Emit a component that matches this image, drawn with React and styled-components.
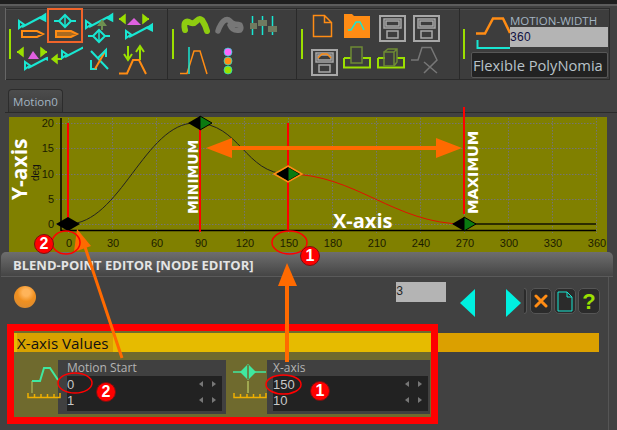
import React from 'react';
import styled, { createGlobalStyle } from 'styled-components';

const CYAN = '#19e6d2';
const LIME = '#9be000';
const ORANGE = '#ff8c14';
const ARROW = '#ff6a00';
const GRAY = '#a8a8a8';

const GlobalStyle = createGlobalStyle`
  html, body {
    margin: 0;
    padding: 0;
    background: #414141;
    font-family: "Open Sans", "Liberation Sans", sans-serif;
  }
`;

const Page = styled.div`
  position: relative;
  width: 617px;
  height: 430px;
  overflow: hidden;
  background: #414141;
  display: flex;
  flex-direction: column;
`;

const TopStrip = styled.div`
  height: 4px;
  flex: none;
  background: #1f1f1f;
  border-bottom: 2px solid #5c5c5c;
`;

const Toolbar = styled.div`
  flex: none;
  display: flex;
  height: 72px;
  margin: 2px 0 0 5px;
  border-left: 1px solid #666;
`;

const ToolGroup = styled.div`
  width: ${(p) => p.$width}px;
  display: flex;
  align-items: center;
  gap: ${(p) => p.$gap}px;
  padding-left: ${(p) => p.$pad}px;
  box-sizing: border-box;
  background: #3d3d3d;
  border-top: 1px solid #2c2c2c;
  border-right: 1px solid #2a2a2a;
  border-bottom: 1px solid #2a2a2a;
  box-shadow: inset 0 1px 0 #4d4d4d;
`;

const GreenBar = styled.div`
  width: 2px;
  height: 30px;
  flex: none;
  background: ${LIME};
`;

const ToolGrid = styled.div`
  display: grid;
  grid-template-columns: repeat(${(p) => p.$cols}, ${(p) => p.$cell}px);
  grid-auto-rows: 35px;
`;

const Tile = styled.div`
  position: relative;
  width: 100%;
  height: 35px;
  svg {
    display: block;
  }
  ${(p) =>
    p.$active &&
    `
    &::after {
      content: '';
      position: absolute;
      left: -1px;
      top: -1px;
      width: 32px;
      height: 31px;
      border: 2px solid #f0642a;
    }
  `}
`;

const WidthBlock = styled.div`
  position: relative;
  align-self: flex-start;
  display: flex;
  flex-direction: column;
  width: 137px;
  margin: 5px 0 0 6px;
`;

const WidthTop = styled.div`
  display: flex;
  height: 38px;
`;

const WidthFields = styled.div`
  flex: 1;
  display: flex;
  flex-direction: column;
`;

const WidthLabel = styled.div`
  font: 11.5px/13px "Open Sans", sans-serif;
  color: #a3b4c2;
  height: 13px;
  white-space: nowrap;
`;

const WidthInput = styled.div`
  height: 20px;
  background: #b4b4b4;
  color: #101040;
  font: 12px/20px "Liberation Sans", sans-serif;
  letter-spacing: 0.3px;
`;

const Dropdown = styled.div`
  height: 26px;
  box-sizing: border-box;
  background: #222;
  border: 1px solid #575757;
  border-radius: 2px;
  color: #b9c2c9;
  font: 14.7px/24px "Open Sans", sans-serif;
  padding-left: 1px;
  white-space: nowrap;
`;

const TabStrip = styled.div`
  flex: none;
  height: 25px;
  margin: 8px 0 0 5px;
  display: flex;
  align-items: flex-end;
  padding-left: 3px;
  border-bottom: 1px solid #2a2a2a;
  box-sizing: border-box;
`;

const Tab = styled.div`
  width: 55px;
  height: 23px;
  box-sizing: border-box;
  border: 1px solid #2c2c2c;
  border-bottom: none;
  border-radius: 4px 4px 0 0;
  background: linear-gradient(#4c4c4c, #3b3b3b);
  color: #a3b4c2;
  font: 11.5px/24px "Open Sans", sans-serif;
  text-align: center;
`;

const ChartWrap = styled.div`
  flex: none;
  height: 135px;
  margin: 4px 10px 0 9px;
  background: #808000;
  svg {
    display: block;
    overflow: visible;
  }
`;

const Editor = styled.div`
  position: relative;
  z-index: 1;
  flex: 1;
  margin: 0 4px 0 1px;
  display: flex;
  flex-direction: column;
  background: #414141;
  border-radius: 5px 5px 0 0;
`;

const EditorTitle = styled.div`
  height: 25px;
  flex: none;
  box-sizing: border-box;
  padding-left: 12px;
  background: linear-gradient(#6e6e6e, #454545);
  border-radius: 5px 5px 0 0;
  border-bottom: 1px solid #5a5a5a;
  color: #e4e4e4;
  font: bold 13px/26px "Open Sans", sans-serif;
  white-space: nowrap;
`;

const EditorBody = styled.div`
  flex: 1;
  margin: 0 4px;
  padding: 5px 0 0 2px;
  border-right: 1px solid #555;
`;

const Controls = styled.div`
  display: flex;
  height: 42px;
  align-items: flex-start;
`;

const Ball = styled.div`
  width: 22px;
  height: 22px;
  margin: 4px 0 0 7px;
  border-radius: 50%;
  background: radial-gradient(circle at 55% 30%, #ffb45a 0 18%, #f09020 45%, #d08838 100%);
`;

const CountField = styled.div`
  width: 50px;
  height: 20px;
  margin-left: 360px;
  background: #b4b4b4;
  color: #222;
  font: 12px/20px "Liberation Mono", monospace;
`;

const Pointers = styled.div`
  display: flex;
  gap: 31px;
  margin: 7px 0 0 14px;
`;

const IconButtons = styled.div`
  display: flex;
  gap: 2px;
  margin: 6px 0 0 3px;
`;

const ButtonStub = styled.div`
  width: 3px;
  height: 26px;
  margin-right: 1px;
  box-sizing: border-box;
  border: 1px solid #555;
  border-left: none;
  border-radius: 0 5px 5px 0;
  background: #2b2b2b;
`;

const IconButton = styled.div`
  width: 22px;
  height: 26px;
  box-sizing: border-box;
  border: 1px solid #555;
  border-radius: 5px;
  background: #2b2b2b;
  display: flex;
  align-items: center;
  justify-content: center;
  color: ${(p) => p.$color};
  font: bold 22px/25px "Liberation Sans", sans-serif;
`;

const ValuesRow = styled.div`
  display: flex;
`;

const HighlightBox = styled.div`
  width: 431px;
  height: 100px;
  box-sizing: border-box;
  border: 7px solid #ff0000;
  background: #6f6a2e;
  display: flex;
  flex-direction: column;
`;

const SectionBar = styled.div`
  height: 19px;
  margin-top: 2px;
  flex: none;
  background: #e6bb00;
`;

const SectionLabel = styled.div`
  width: 96px;
  height: 19px;
  margin-left: 3px;
  background: #d8a200;
  color: #111;
  font: 15.2px/20px "Open Sans", sans-serif;
  white-space: nowrap;
`;

const BarTail = styled.div`
  width: 161px;
  height: 19px;
  margin-top: 9px;
  background: #dba000;
`;

const FieldRow = styled.div`
  display: flex;
  margin-top: 8px;
`;

const FieldIcon = styled.div`
  position: relative;
  z-index: 1;
  width: ${(p) => p.$width}px;
  padding-left: ${(p) => p.$pad}px;
  box-sizing: border-box;
  flex: none;
  svg {
    display: block;
    overflow: visible;
  }
`;

const FieldCard = styled.div`
  width: ${(p) => p.$width}px;
  height: 54px;
  flex: none;
  box-sizing: border-box;
  background: #404040;
  padding-left: ${(p) => p.$pad}px;
`;

const FieldTitle = styled.div`
  height: 16px;
  color: #b4b4b4;
  font: 12px/16px "Open Sans", sans-serif;
`;

const FieldBody = styled.div`
  width: ${(p) => p.$width}px;
  height: 35px;
  background: #222;
`;

const FieldLine = styled.div`
  height: 16px;
  display: flex;
  align-items: center;
  color: #c8c8c8;
  font: 13px/15px "Liberation Sans", sans-serif;
`;

const Spin = styled.div`
  margin-left: auto;
  margin-right: 6px;
  display: flex;
  gap: 9px;
`;

const SpinArrow = styled.span`
  width: 0;
  height: 0;
  border-top: 3.5px solid transparent;
  border-bottom: 3.5px solid transparent;
  ${(p) => (p.$dir === 'left' ? 'border-right: 4px solid #777;' : 'border-left: 4px solid #777;')}
`;

const Overlay = styled.svg`
  position: absolute;
  left: 0;
  top: 0;
  z-index: 2;
  pointer-events: none;
`;

const Badge = styled.div`
  position: absolute;
  z-index: 3;
  left: ${(p) => p.$x - 10}px;
  top: ${(p) => p.$y - 10}px;
  width: 20px;
  height: 20px;
  box-sizing: border-box;
  border-radius: 50%;
  background: #f00;
  border: 1px solid #7a1010;
  color: #fff;
  font: bold 16px/18px "Liberation Sans", sans-serif;
  text-align: center;
`;

const Tool = ({ x, y, w = 35, h = 35, children }) => (
  <svg width={w} height={h} viewBox={`${x} ${y} ${w} ${h}`} fill="none" strokeWidth="1.5">
    {children}
  </svg>
);

// ramp with a small end triangle on both sides
const Ramp = ({ dx = 0, dy = 0 }) => (
  <g transform={`translate(${dx} ${dy})`} stroke={CYAN}>
    <path d="M19 21 L19 28 L24 24.5 Z" strokeWidth="2" />
    <path d="M22 27 L41 17" strokeWidth="2" />
    <path d="M45.5 14 L45.5 21 L39.5 18 Z" fill={CYAN} />
  </g>
);

const Pencil = ({ dx = 0, dy = 0, filled }) => (
  <path
    transform={`translate(${dx} ${dy})`}
    d="M22 31 H37 L43 34 L37 37 H22 Z"
    stroke={ORANGE}
    strokeWidth="2"
    fill={filled ? '#a86a20' : 'none'}
  />
);

const Node = ({ cx, cy, span = 11 }) => (
  <g stroke={CYAN}>
    <path d={`M${cx - span} ${cy} H${cx + span}`} strokeWidth="2" />
    <path d={`M${cx} ${cy - 6} L${cx + 6} ${cy} L${cx} ${cy + 6} L${cx - 6} ${cy} Z`} fill="#3d3d3d" strokeWidth="2" />
    <path d={`M${cx} ${cy - 5} V${cy + 5}`} />
  </g>
);

const Bracket = ({ x, y, dir }) => (
  <g fill={LIME} stroke={LIME}>
    <path d={`M${x} ${y} h${dir * 6}`} strokeWidth="2" />
    <path d={`M${x + dir * 6} ${y - 4} v8 l${-dir * 5} -4 Z`} />
  </g>
);

const Floppy = ({ x, y, stroke = GRAY, children }) => (
  <g stroke={stroke} transform={`translate(${x} ${y})`}>
    <rect x="1" y="1" width="25" height="25" strokeWidth="2" />
    <rect x="5" y="4" width="17" height="9" />
    <rect x="7" y="6" width="13" height="5" />
    <rect x="8" y="16" width="11" height="7" strokeWidth="1.5" />
    {children}
  </g>
);

const Tray = ({ x, children }) => (
  <g>
    <path d={`M${x + 1} 58 V67.5 H${x + 27} V58 H${x + 20} M${x + 8} 58 H${x + 1}`} stroke={LIME} strokeWidth="2" />
    {children}
  </g>
);

const MotionTools = [
  <Tool x={13} y={9} key="a1"><Ramp /><Pencil /></Tool>,
  <Tool x={48} y={9} key="a2"><Node cx={65} cy={21} /><Pencil dx={34} filled /></Tool>,
  <Tool x={83} y={9} key="a3">
    <Ramp dx={67} />
    <path d="M102 30 V24 M99 25 L102 21 L105 25 Z" stroke="#6f8f50" strokeWidth="2" fill="#6f8f50" />
    <Node cx={99} cy={36} />
  </Tool>,
  <Tool x={118} y={9} key="a4">
    <Bracket x={119} y={19} dir={1} />
    <path d="M134 18 L141 25 H127 Z" fill="#e060e0" />
    <Bracket x={149} y={19} dir={-1} />
    <Ramp dx={107} dy={10} />
  </Tool>,
  <Tool x={13} y={44} key="b1">
    <Bracket x={17} y={52} dir={1} />
    <path d="M33 51 L39 59 H28 Z" fill="#e060e0" />
    <Bracket x={47} y={52} dir={-1} />
    <Ramp dx={6} dy={41} />
  </Tool>,
  <Tool x={48} y={44} key="b2">
    <path d="M52 59 L57 55 V63 Z" fill={LIME} stroke={LIME} />
    <path d="M56 59 H62" stroke={LIME} strokeWidth="2" />
    <Ramp dx={43} dy={30} />
  </Tool>,
  <Tool x={83} y={44} key="b3">
    <path d="M91 51 L108 69" stroke={CYAN} strokeWidth="2" />
    <path d="M91 60 V69 H97" stroke={CYAN} strokeWidth="2" />
    <path d="M95 69 L106 50" stroke={ORANGE} strokeWidth="2" />
    <path d="M98 58 L106 50 V57" stroke={CYAN} strokeWidth="2" />
  </Tool>,
  <Tool x={118} y={44} key="b4">
    <path d="M128 46 V58 M124 54 L128 60 L132 54" stroke={LIME} strokeWidth="2" />
    <path d="M140 60 V48 M136 52 L140 46 L144 52" stroke={LIME} strokeWidth="2" />
    <path d="M119 73.5 H127 L133 60 H139 L146 74" stroke={ORANGE} strokeWidth="2" />
  </Tool>,
];

const CurveTools = [
  <Tool x={180} y={9} key="c1" w={35}>
    <path d="M185 30 C183 22 186 20 191 23 C197 25 197 16 202 20 C204 23 206 27 207 31" stroke="#8ecc10" strokeWidth="6" strokeLinecap="round" />
  </Tool>,
  <Tool x={215} y={9} key="c2" w={35}>
    <path d="M218 31 C221 22 226 17 230 21 C233 26 236 23 240 25 C241 27 241 29 240 30 C235 31 232 30 230 25" stroke="#777" strokeWidth="5.5" strokeLinecap="round" />
  </Tool>,
  <Tool x={250} y={9} key="c3" w={35}>
    <path d="M252.5 16 V35 M262.5 16 V35 M272.5 16 V35" stroke={CYAN} strokeWidth="1.5" />
    <rect x="248" y="23" width="9" height="6" fill="#707a60" />
    <rect x="258" y="20" width="9" height="6" fill="#707a60" />
    <rect x="268" y="26" width="9" height="6" fill="#707a60" />
  </Tool>,
  <Tool x={180} y={44} key="d1" w={35}>
    <path d="M180 73.5 H187 L194 51 H200 L207 74" stroke={ORANGE} strokeWidth="1.5" />
    <path d="M189 47 V74" stroke={CYAN} strokeWidth="1.5" />
  </Tool>,
  <Tool x={215} y={44} key="d2" w={35}>
    <circle cx="228" cy="52" r="4" fill="#ff66ff" stroke={CYAN} strokeWidth="0.7" />
    <circle cx="228" cy="61" r="4" fill={ORANGE} stroke={CYAN} strokeWidth="0.7" />
    <circle cx="228" cy="70" r="4" fill={LIME} stroke={CYAN} strokeWidth="0.7" />
  </Tool>,
];

const FileTools = [
  <Tool x={309} y={9} key="e1">
    <path d="M313.5 15.5 H324.5 L331.5 22.5 V36.5 H313.5 Z M324.5 15.5 V22.5 H331.5" stroke={ORANGE} />
  </Tool>,
  <Tool x={343} y={9} key="e2">
    <path d="M344 14 H352 L354 16 H370 V38 H344 Z" fill={ORANGE} />
    <path d="M348 30 H351 L356 22 H360 L364 30" stroke={CYAN} strokeWidth="1.5" />
  </Tool>,
  <Tool x={377} y={9} key="e3"><Floppy x={379} y={15} /></Tool>,
  <Tool x={411} y={9} key="e4"><Floppy x={413} y={15} /></Tool>,
  <Tool x={309} y={44} key="f1">
    <Floppy x={311} y={49}>
      <path d="M7 9 L11 5 H16 L20 9" stroke={ORANGE} strokeWidth="1.5" />
    </Floppy>
  </Tool>,
  <Tool x={343} y={44} key="f2">
    <Tray x={343} />
    <rect x="351" y="47" width="11" height="16" stroke="#6e8a35" strokeWidth="1.5" />
  </Tool>,
  <Tool x={377} y={44} key="f3">
    <Tray x={377} />
    <path d="M384 52 H394 V66 H384 Z M384 52 L388 49 H397 V62 L394 66 M394 52 L397 49" stroke="#6e8a35" strokeWidth="1.5" />
  </Tool>,
  <Tool x={411} y={44} key="f4">
    <path d="M411 60 H418 L422 47.5 H431 L437 60 L424 73 M424 62 L437 73" stroke="#777" strokeWidth="1.5" />
  </Tool>,
];

const xTicks = [0, 30, 60, 90, 120, 150, 180, 210, 240, 270, 300, 330, 360];
const yTicks = [0, 5, 10, 15, 20];
const px = (v) => 68 + (v / 30) * 44;
const py = (v) => Math.round(224 - v * 5.05);

const HalfDiamond = ({ x, y, w = 12, h = 7, ring }) => (
  <g>
    <path d={`M${x} ${y - h} L${x - w} ${y} L${x} ${y + h} Z`} fill="#000" />
    <path d={`M${x} ${y - h} L${x + w} ${y} L${x} ${y + h} Z`} fill={ring === 'plain' ? '#000' : '#0a7a10'} stroke={ring === 'plain' ? 'none' : '#000'} />
    {ring === 'orange' && <path d={`M${x} ${y - h - 1} L${x + w + 2} ${y} L${x} ${y + h + 1} L${x - w - 2} ${y} Z`} stroke="#ff8c14" strokeWidth="1.5" />}
  </g>
);

const Chart = () => (
  <svg width="598" height="135" viewBox="9 117 598 135" fill="none">
    {xTicks.map((t) => (
      <path key={t} d={`M${px(t) + 0.5} 118 V233`} stroke="#757575" strokeDasharray="1.5 1.5" />
    ))}
    {yTicks.map((t) => (
      <path key={t} d={`M56 ${py(t) + 0.5} H596`} stroke="#757575" strokeDasharray="1.5 1.5" />
    ))}
    <path d="M61 118 V231 M61 230.5 H596" stroke="#000" strokeWidth="1.5" />
    <path d="M464 224 H596" stroke="#2c2c00" strokeWidth="2" />
    <path d="M68 224 C120 224 145 123 195 123 C240 123 245 174 288 174" stroke="#222" />
    <path d="M288 174 C355 174 395 224 464 224" stroke="#e01000" />
    <path d="M68 123 V230 M200 127 V232 M288 123 V230 M464 107 V214" stroke="#f00" strokeWidth="2" />
    <HalfDiamond x={68} y={224} ring="plain" />
    <HalfDiamond x={200} y={123} />
    <HalfDiamond x={288} y={174} ring="orange" />
    <HalfDiamond x={464} y={224} />
    {xTicks.map((t) => (
      <text key={t} x={px(t) + 1} y={247} textAnchor="middle" fontFamily="Liberation Sans" fontSize="11" fill="#1c1c00">
        {t}
      </text>
    ))}
    {yTicks.map((t) => (
      <text key={t} x={54} y={py(t) + 4} textAnchor="end" fontFamily="Liberation Sans" fontSize="11" fill="#1c1c00">
        {t}
      </text>
    ))}
    <text transform="translate(27 200) rotate(-90)" fontFamily="Open Sans" fontWeight="700" fontSize="21" fill="#fff">Y-axis</text>
    <text transform="translate(39 181) rotate(-90)" fontFamily="Liberation Sans" fontSize="10" fill="#111">deg</text>
    <text transform="translate(198 214) rotate(-90)" fontFamily="DejaVu Sans" fontWeight="700" fontSize="13.8" fill="#fff">MINIMUM</text>
    <text transform="translate(478 214) rotate(-90)" fontFamily="DejaVu Sans" fontWeight="700" fontSize="14.6" fill="#fff">MAXIMUM</text>
    <text x="333" y="228" fontFamily="Open Sans" fontWeight="700" fontSize="20" fill="#fff">X-axis</text>
  </svg>
);

const RulerIcon = ({ children }) => (
  <svg width="33" height="54" viewBox="0 0 33 54" fill="none">
    {children}
    <path d="M1 33 V37.5 H33 V33 M7.5 34 V37 M14 34 V37 M20.5 34 V37 M27 34 V37" stroke="#f0b000" strokeWidth="1.5" />
  </svg>
);

const ValueField = ({ title, value, step, width, bodyWidth, pad }) => (
  <FieldCard $width={width} $pad={pad}>
    <FieldTitle>{title}</FieldTitle>
    <FieldBody $width={bodyWidth}>
      {[value, step].map((v, i) => (
        <FieldLine key={i}>
          {v}
          <Spin>
            <SpinArrow $dir="left" />
            <SpinArrow $dir="right" />
          </Spin>
        </FieldLine>
      ))}
    </FieldBody>
  </FieldCard>
);

const App = () => (
  <Page>
    <GlobalStyle />
    <TopStrip />
    <Toolbar>
      <ToolGroup $width={162} $gap={2} $pad={3}>
        <GreenBar />
        <ToolGrid $cols={4} $cell={35}>
          {MotionTools.map((tool, i) => (
            <Tile key={i} $active={i === 1}>{tool}</Tile>
          ))}
        </ToolGrid>
      </ToolGroup>
      <ToolGroup $width={129} $gap={6} $pad={4}>
        <GreenBar />
        <ToolGrid $cols={3} $cell={35}>
          {CurveTools.map((tool, i) => (
            <Tile key={i}>{tool}</Tile>
          ))}
        </ToolGrid>
      </ToolGroup>
      <ToolGroup $width={163} $gap={6} $pad={4}>
        <GreenBar />
        <ToolGrid $cols={4} $cell={34}>
          {FileTools.map((tool, i) => (
            <Tile key={i}>{tool}</Tile>
          ))}
        </ToolGrid>
      </ToolGroup>
      <ToolGroup $width={150} $gap={0} $pad={3}>
        <GreenBar />
        <WidthBlock>
          <WidthTop>
            <svg width="39" height="38" viewBox="471 14 39 38" fill="none">
              <path d="M476 33.5 H485 L493 18.5 H503 L510 33" stroke={ORANGE} strokeWidth="2.5" />
              <path d="M477.5 40 V48 H510" stroke={CYAN} strokeWidth="2" />
            </svg>
            <WidthFields>
              <WidthLabel>MOTION-WIDTH</WidthLabel>
              <WidthInput>360</WidthInput>
            </WidthFields>
          </WidthTop>
          <Dropdown>Flexible PolyNomia</Dropdown>
        </WidthBlock>
      </ToolGroup>
    </Toolbar>
    <TabStrip>
      <Tab>Motion0</Tab>
    </TabStrip>
    <ChartWrap>
      <Chart />
    </ChartWrap>
    <Editor>
      <EditorTitle>BLEND-POINT EDITOR [NODE EDITOR]</EditorTitle>
      <EditorBody>
        <Controls>
          <Ball />
          <CountField>3</CountField>
          <Pointers>
            <svg width="15" height="28" viewBox="0 0 15 28">
              <path d="M15 0 V28 L0 14 Z" fill="#00f0e0" />
            </svg>
            <svg width="15" height="28" viewBox="0 0 15 28">
              <path d="M0 0 V28 L15 14 Z" fill="#00f0e0" />
            </svg>
          </Pointers>
          <IconButtons>
            <ButtonStub />
            <IconButton $color={ORANGE}>
              <svg width="14" height="14" viewBox="0 0 14 14">
                <path d="M2 2 L12 12 M12 2 L2 12" stroke={ORANGE} strokeWidth="3" strokeLinecap="round" />
              </svg>
            </IconButton>
            <IconButton $color={CYAN}>
              <svg width="16" height="21" viewBox="0 0 16 21" fill="none">
                <path d="M1 1 H10 L15 6 V20 H1 Z M10 1 V6 H15" stroke="#19e6d2" />
              </svg>
            </IconButton>
            <IconButton $color={LIME}>?</IconButton>
          </IconButtons>
        </Controls>
        <ValuesRow>
          <HighlightBox>
            <SectionBar>
              <SectionLabel>X-axis Values</SectionLabel>
            </SectionBar>
            <FieldRow>
              <FieldIcon $width={44} $pad={13}>
                <RulerIcon>
                  <path d="M5 33 V21" stroke="#a0a850" strokeWidth="1.5" />
                  <path d="M5 21 H13 L17 8 H23 L31 20" stroke="#40e8a0" strokeWidth="2" />
                </RulerIcon>
              </FieldIcon>
              <ValueField title="Motion Start" value="0" step="1" width={168} bodyWidth={155} pad={9} />
              <FieldIcon $width={41} $pad={7}>
                <RulerIcon>
                  <path d="M0 12 H33" stroke="#40e8a0" strokeWidth="1.5" />
                  <path d="M15 4 L23 12 L15 20 L7 12 Z" fill="#40e8a0" />
                  <path d="M15 5 V19" stroke="#6f6a2e" strokeWidth="1.5" />
                  <path d="M15 21 V33" stroke="#a0a850" strokeWidth="2" />
                </RulerIcon>
              </FieldIcon>
              <ValueField title="X-axis" value="150" step="10" width={163} bodyWidth={155} pad={6} />
            </FieldRow>
          </HighlightBox>
          <BarTail />
        </ValuesRow>
      </EditorBody>
    </Editor>
    <Overlay width="617" height="430" viewBox="0 0 617 430" fill="none">
      <path d="M230 148 H438" stroke={ARROW} strokeWidth="4" />
      <path d="M206 148 L232 138 V158 Z M462 148 L436 138 V158 Z" fill={ARROW} />
      <path d="M122 358 L84 244" stroke={ARROW} strokeWidth="3" />
      <path d="M77 229 L74 252 L91 246 Z" fill={ARROW} />
      <path d="M287 362 V284" stroke={ARROW} strokeWidth="4" />
      <path d="M287 263 L278 286 H297 Z" fill={ARROW} />
      <ellipse cx="66" cy="242.5" rx="14" ry="11.5" stroke="#f00" strokeWidth="1.5" />
      <ellipse cx="289.5" cy="242.5" rx="17.5" ry="11.5" stroke="#f00" strokeWidth="1.5" />
      <ellipse cx="75" cy="383" rx="17" ry="10" stroke="#f00" strokeWidth="1.5" />
      <ellipse cx="283.5" cy="384.5" rx="17.5" ry="9.5" stroke="#f00" strokeWidth="1.5" />
    </Overlay>
    <Badge $x={44} $y={244}>2</Badge>
    <Badge $x={310} $y={256}>1</Badge>
    <Badge $x={106} $y={392}>2</Badge>
    <Badge $x={320} $y={391}>1</Badge>
  </Page>
);

export default App;
